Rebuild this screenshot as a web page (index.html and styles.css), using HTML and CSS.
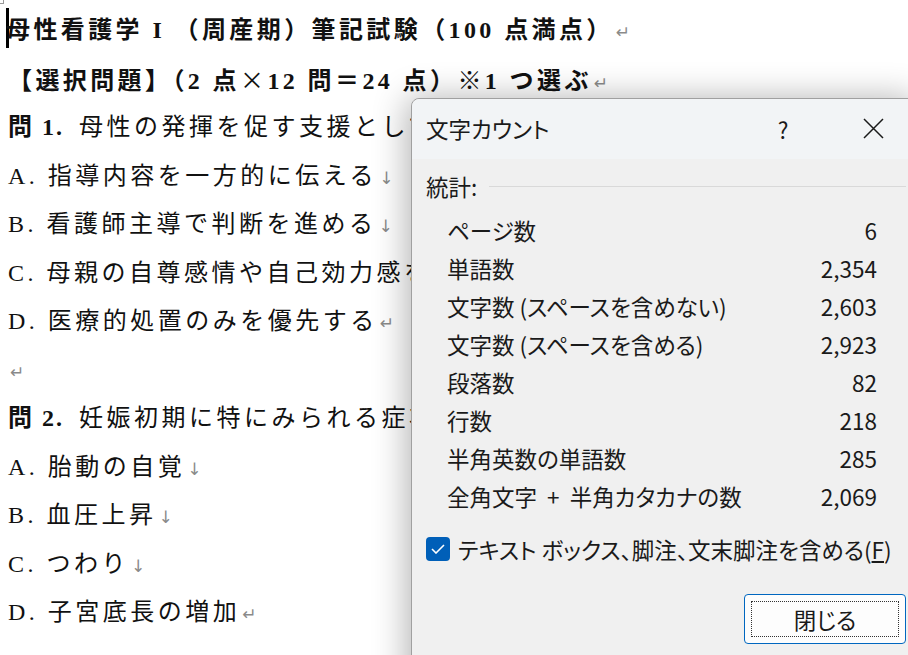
FILE: index.html
```html
<!DOCTYPE html>
<html lang="ja">
<head>
	<meta charset="utf-8">
	<title>文字カウント</title>
	<link rel="stylesheet" href="styles.css">
</head>
<body>

<div class="page">
	<span class="corner"></span>
	<p class="line head"><span class="caret"></span>母性看護学 I （周産期）筆記試験（100 点満点）<span class="pm">↵</span></p>
	<p class="line head">【選択問題】（2 点<span class="zen">×</span>12 問＝24 点）※1 つ選ぶ<span class="pm">↵</span></p>
	<p class="line"><b class="q">問 1.</b>母性の発揮を促す支援として最も適切なものはどれか。<span class="pm">↵</span></p>
	<p class="line">A. 指導内容を一方的に伝える<span class="lb">↓</span></p>
	<p class="line">B. 看護師主導で判断を進める<span class="lb">↓</span></p>
	<p class="line">C. 母親の自尊感情や自己効力感を高める<span class="lb">↓</span></p>
	<p class="line">D. 医療的処置のみを優先する<span class="pm">↵</span></p>
	<p class="line"><span class="pm">↵</span></p>
	<p class="line"><b class="q">問 2.</b>妊娠初期に特にみられる症状はどれか。<span class="pm">↵</span></p>
	<p class="line">A. 胎動の自覚<span class="lb">↓</span></p>
	<p class="line">B. 血圧上昇<span class="lb">↓</span></p>
	<p class="line">C. つわり<span class="lb">↓</span></p>
	<p class="line">D. 子宮底長の増加<span class="pm">↵</span></p>
	<p class="line"><span class="pm">↵</span></p>
</div>

<div class="dialog">
	<div class="dlg-head">
		<span class="dlg-title">文字カウント</span>
		<span class="dlg-btn help">?</span>
		<span class="dlg-btn close">
			<svg width="21" height="21" viewBox="0 0 21 21"><path d="M1 1 L20 20 M20 1 L1 20" stroke="#1a1a1a" stroke-width="1.5" fill="none"/></svg>
		</span>
	</div>
	<div class="dlg-body">
		<div class="group">
			<span>統計:</span>
			<span class="rule"></span>
		</div>
		<ul class="stats">
			<li><span>ページ数</span><span>6</span></li>
			<li><span>単語数</span><span>2,354</span></li>
			<li><span>文字数 (スペースを含めない)</span><span>2,603</span></li>
			<li><span>文字数 (スペースを含める)</span><span>2,923</span></li>
			<li><span>段落数</span><span>82</span></li>
			<li><span>行数</span><span>218</span></li>
			<li><span>半角英数の単語数</span><span>285</span></li>
			<li><span>全角文字&nbsp; +&nbsp; 半角カタカナの数</span><span>2,069</span></li>
		</ul>
		<label class="check">
			<span class="box">
				<svg width="14" height="10" viewBox="0 0 14 10"><path d="M1 5 L5 9 L13 1" stroke="#fff" stroke-width="1.6" fill="none"/></svg>
			</span>
			<span>テキスト ボックス、脚注、文末脚注を含める(<u>F</u>)</span>
		</label>
		<div class="actions">
			<span class="btn"><span class="focus">閉じる</span></span>
		</div>
	</div>
</div>

</body>
</html>
```

FILE: styles.css
```css
	html, body {
		margin: 0;
		height: 100%;
		overflow: hidden;
		background-color: #FFFFFF;
	}
	.page {
		padding: 6px 0 0 8px;
		font-family: "Liberation Serif", "Noto Sans CJK JP", serif;
		font-size: 24px;
		color: #111;
		white-space: nowrap;
	}
	.corner {
		position: absolute;
		left: 0;
		top: 0;
		width: 3px;
		height: 3px;
		border-right: 1px solid #999;
		border-bottom: 1px solid #999;
	}
	.line {
		margin: 0;
		height: 48.5px;
		line-height: 48px;
		letter-spacing: 3.5px;
	}
	.line.head {
		font-weight: bold;
		letter-spacing: 3.4px;
	}
	.zen {
		font-family: "Noto Sans CJK JP", sans-serif;
		font-weight: normal;
	}
	.q {
		letter-spacing: 2px;
		margin-right: 15px;
	}
	.caret {
		display: inline-block;
		width: 3px;
		height: 40px;
		margin: 0 -3px 0 -2px;
		vertical-align: -10px;
		background-color: #000;
	}
	.pm, .lb {
		font-family: "DejaVu Sans", sans-serif;
		font-weight: normal;
		font-size: 17px;
		color: #8a8a8a;
		margin-left: 2px;
	}

	.dialog {
		position: absolute;
		left: 411px;
		top: 98px;
		width: 506px;
		height: 600px;
		background-color: #F0F0F0;
		border: 1px solid #A0A0A0;
		border-radius: 8px 0 0 0;
		box-shadow: -4px 0 34px rgba(0,0,0,0.3);
		font-family: "Noto Sans CJK JP", sans-serif;
		font-feature-settings: "palt";
		font-size: 22.5px;
		color: #1a1a1a;
	}
	.dlg-head {
		display: flex;
		align-items: center;
		height: 60px;
		padding-left: 14px;
		background-color: #F2F4F6;
		border-radius: 8px 0 0 0;
	}
	.dlg-title {
		flex: 1;
		margin-top: -3px;
	}
	.dlg-btn {
		width: 90px;
		text-align: center;
		line-height: 1;
	}
	.dlg-body {
		padding: 8px 12px 0 14px;
	}
	.group {
		display: flex;
		align-items: center;
		height: 38px;
	}
	.rule {
		flex: 1;
		margin-left: 12px;
		border-top: 1px solid #D9D9D9;
	}
	.stats {
		list-style: none;
		margin: 6px 29px 0 21px;
		padding: 0;
	}
	.stats li {
		display: flex;
		justify-content: space-between;
		height: 38px;
		line-height: 38px;
	}
	.check {
		display: flex;
		align-items: center;
		gap: 8px;
		height: 38px;
		margin-top: 15px;
	}
	.box {
		display: flex;
		align-items: center;
		justify-content: center;
		width: 24px;
		height: 24px;
		border-radius: 4px;
		background-color: #005FB8;
	}
	.actions {
		display: flex;
		justify-content: flex-end;
		margin-top: 26px;
	}
	.btn {
		display: block;
		width: 162px;
		height: 50px;
		padding: 6px;
		box-sizing: border-box;
		background-color: #FDFDFD;
		border: 1px solid #0067C0;
		border-radius: 4px;
	}
	.focus {
		display: block;
		height: 100%;
		border: 1px dotted #333;
		text-align: center;
		line-height: 34px;
		box-sizing: border-box;
	}
```
